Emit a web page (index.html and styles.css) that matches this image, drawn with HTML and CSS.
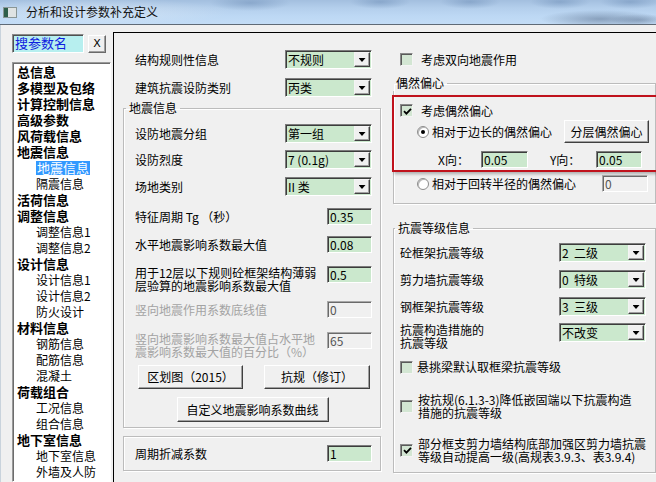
FILE: index.html
```html
<!DOCTYPE html>
<html lang="zh">
<head>
<meta charset="utf-8">
<title>分析和设计参数补充定义</title>
<link rel="stylesheet" href="styles.css">
</head>
<body>
<div class="window">
  <header class="titlebar">
    <svg class="app-icon" width="14" height="11" viewBox="0 0 14 11">
      <rect x="0.5" y="0.5" width="13" height="10" fill="#dfe3e3" stroke="#8a9696"/>
      <rect x="1" y="1" width="4" height="9" fill="#2f5f4a"/>
    </svg>
    <span class="title">分析和设计参数补充定义</span>
  </header>
  <div class="client">
    <aside class="sidebar">
      <div class="search">
        <span class="search-box">搜参数名</span>
        <span class="x-btn">X</span>
      </div>
      <ul class="tree">
        <li class="h">总信息</li>
        <li class="h">多模型及包络</li>
        <li class="h">计算控制信息</li>
        <li class="h">高级参数</li>
        <li class="h">风荷载信息</li>
        <li class="h">地震信息</li>
        <li class="s"><span class="sel">地震信息</span></li>
        <li class="s">隔震信息</li>
        <li class="h">活荷信息</li>
        <li class="h">调整信息</li>
        <li class="s">调整信息1</li>
        <li class="s">调整信息2</li>
        <li class="h">设计信息</li>
        <li class="s">设计信息1</li>
        <li class="s">设计信息2</li>
        <li class="s">防火设计</li>
        <li class="h">材料信息</li>
        <li class="s">钢筋信息</li>
        <li class="s">配筋信息</li>
        <li class="s">混凝土</li>
        <li class="h">荷载组合</li>
        <li class="s">工况信息</li>
        <li class="s">组合信息</li>
        <li class="h">地下室信息</li>
        <li class="s">地下室信息</li>
        <li class="s">外墙及人防</li>
      </ul>
    </aside>

    <main class="pane">
      <section class="mid">
        <div class="top-row">
          <span>结构规则性信息</span>
          <div class="combo"><span class="val">不规则</span><span class="drop"></span></div>
        </div>
        <div class="top-row r2">
          <span>建筑抗震设防类别</span>
          <div class="combo"><span class="val">丙类</span><span class="drop"></span></div>
        </div>

        <fieldset class="group g-quake">
          <legend>地震信息</legend>
          <div class="grow mt8">
            <span>设防地震分组</span>
            <div class="combo"><span class="val">第一组</span><span class="drop"></span></div>
          </div>
          <div class="grow mt7">
            <span>设防烈度</span>
            <div class="combo"><span class="val">7 (0.1g)</span><span class="drop"></span></div>
          </div>
          <div class="grow mt8">
            <span>场地类别</span>
            <div class="combo"><span class="val">II 类</span><span class="drop"></span></div>
          </div>
          <div class="grow mt12">
            <span>特征周期 Tg （秒）</span>
            <span class="tb">0.35</span>
          </div>
          <div class="grow mt11">
            <span>水平地震影响系数最大值</span>
            <span class="tb">0.08</span>
          </div>
          <div class="grow top mt13">
            <span class="two">用于12层以下规则砼框架结构薄弱<br>层验算的地震影响系数最大值</span>
            <span class="tb">0.5</span>
          </div>
          <div class="grow mt9 dis">
            <span>竖向地震作用系数底线值</span>
            <span class="tb off">0</span>
          </div>
          <div class="grow top mt14 dis">
            <span class="two">竖向地震影响系数最大值占水平地<br>震影响系数最大值的百分比（%）</span>
            <span class="tb off">65</span>
          </div>
          <div class="btn-row mt7">
            <span class="btn w105">区划图（2015）</span>
            <span class="btn w106">抗规（修订）</span>
          </div>
          <div class="btn-row center mt8">
            <span class="btn w152 h25">自定义地震影响系数曲线</span>
          </div>
        </fieldset>

        <div class="box">
          <div class="grow">
            <span>周期折减系数</span>
            <span class="tb">1</span>
          </div>
        </div>
      </section>

      <section class="right">
        <div class="cb-row first">
          <span class="cb"></span>
          <span>考虑双向地震作用</span>
        </div>

        <fieldset class="group g-ecc">
          <legend>偶然偏心</legend>
          <div class="red">
            <div class="cb-row in-red">
              <span class="cb on"><svg width="9" height="9" viewBox="0 0 9 9"><path d="M1 4.2 L3.4 6.6 L8 1.8" fill="none" stroke="#000" stroke-width="1.8"/></svg></span>
              <span>考虑偶然偏心</span>
            </div>
            <div class="radio-row">
              <span class="rb on"></span>
              <span class="rb-label">相对于边长的偶然偏心</span>
              <span class="btn w85">分层偶然偏心</span>
            </div>
            <div class="xy-row">
              <span class="xy-lbl">X向：</span>
              <span class="tb w47">0.05</span>
              <span class="xy-lbl ylbl">Y向：</span>
              <span class="tb w46">0.05</span>
            </div>
          </div>
          <div class="radio-row r2row">
            <span class="rb"></span>
            <span class="rb-label">相对于回转半径的偶然偏心</span>
            <span class="tb w46 off push">0</span>
          </div>
        </fieldset>

        <fieldset class="group g-level">
          <legend>抗震等级信息</legend>
          <div class="grow mt7">
            <span>砼框架抗震等级</span>
            <div class="combo"><span class="val">2&nbsp;&nbsp;二级</span><span class="drop"></span></div>
          </div>
          <div class="grow mt8">
            <span>剪力墙抗震等级</span>
            <div class="combo"><span class="val">0&nbsp;&nbsp;特级</span><span class="drop"></span></div>
          </div>
          <div class="grow mt8">
            <span>钢框架抗震等级</span>
            <div class="combo"><span class="val">3&nbsp;&nbsp;三级</span><span class="drop"></span></div>
          </div>
          <div class="grow top mt7">
            <span class="two">抗震构造措施的<br>抗震等级</span>
            <div class="combo"><span class="val">不改变</span><span class="drop"></span></div>
          </div>
          <div class="cb-row g mt11">
            <span class="cb"></span>
            <span>悬挑梁默认取框梁抗震等级</span>
          </div>
          <div class="cb-row g gap5 mt19">
            <span class="cb"></span>
            <span class="two">按抗规(6.1.3-3)降低嵌固端以下抗震构造<br>措施的抗震等级</span>
          </div>
          <div class="cb-row g gap5 mt18">
            <span class="cb on"><svg width="9" height="9" viewBox="0 0 9 9"><path d="M1 4.2 L3.4 6.6 L8 1.8" fill="none" stroke="#000" stroke-width="1.8"/></svg></span>
            <span class="two">部分框支剪力墙结构底部加强区剪力墙抗震<br>等级自动提高一级(高规表3.9.3、表3.9.4)</span>
          </div>
        </fieldset>
      </section>
    </main>
  </div>
</div>
</body>
</html>
```
FILE: styles.css
```css
* { box-sizing: border-box; }
html, body { margin: 0; padding: 0; }
body {
  width: 656px;
  height: 482px;
  overflow: hidden;
  background: #f0f0f0;
  font-family: "Noto Sans CJK SC", "DejaVu Sans", sans-serif;
  font-size: 12px;
  line-height: 14px;
  color: #000;
}
.window { width: 656px; height: 482px; display: flex; flex-direction: column; }

/* title bar */
.titlebar {
  height: 24px;
  flex: none;
  display: flex;
  align-items: center;
  gap: 9px;
  padding-left: 3px;
  background:
    radial-gradient(ellipse 60px 9px at 600px 19px, rgba(70,90,120,.45), transparent),
    radial-gradient(ellipse 30px 6px at 640px 20px, rgba(70,90,120,.35), transparent),
    radial-gradient(ellipse 40px 8px at 250px 3px, rgba(80,115,160,.35), transparent),
    radial-gradient(ellipse 30px 7px at 380px 2px, rgba(80,115,160,.35), transparent),
    radial-gradient(ellipse 30px 7px at 470px 2px, rgba(80,115,160,.35), transparent),
    radial-gradient(ellipse 30px 7px at 560px 2px, rgba(80,115,160,.35), transparent),
    radial-gradient(ellipse 30px 7px at 630px 2px, rgba(80,115,160,.35), transparent),
    radial-gradient(ellipse 140px 14px at 90px 12px, rgba(225,235,245,.55), transparent),
    linear-gradient(#a3bfdf 0, #b4cfec 8px, #bdd8f4 16px, #c3dcf6 24px);
}
.app-icon { flex: none; }
.title { font-size: 12px; line-height: 14px; color: #111; }

/* client */
.client {
  flex: 1;
  min-height: 0;
  display: flex;
  border-top: 1px solid #5f6a76;
}
.sidebar {
  width: 113px;
  flex: none;
  display: flex;
  flex-direction: column;
  padding: 9px 0 0 12px;
  border-left: 1px solid #c9d3dc;
}
.search { display: flex; align-items: center; height: 19px; margin-left: -1px; }
.search-box {
  width: 72px;
  height: 19px;
  background: #b7efef;
  color: #1020e0;
  font-size: 13px;
  line-height: 15px;
  padding-left: 2px;
  border: 1px solid;
  border-color: #8a8a8a #ffffff #ffffff #8a8a8a;
  box-shadow: inset 1px 1px 0 #505050;
}
.x-btn {
  width: 18px;
  height: 18px;
  margin-left: 4px;
  display: flex;
  align-items: center;
  justify-content: center;
  font-family: "DejaVu Sans", sans-serif;
  font-size: 11px;
  background: #f0f0f0;
  border: 1px solid;
  border-color: #ffffff #6a6a6a #6a6a6a #ffffff;
  box-shadow: inset -1px -1px 0 #a0a0a0;
}
.tree {
  list-style: none;
  margin: 9px 0 0 -1px;
  padding: 1px 0 0 4px;
  width: 99px;
  flex: 1;
  background: #ffffff;
  border: 1px solid;
  border-color: #9a9a9a #ffffff #ffffff #9a9a9a;
  box-shadow: inset 1px 1px 0 #6c6c6c;
}
.tree li { height: 16px; line-height: 16px; white-space: nowrap; }
.tree .h { font-weight: bold; font-size: 13px; }
.tree .s { padding-left: 19px; font-size: 12px; }
.tree .sel {
  background: #3399ff;
  color: #ffffff;
  padding: 0 1px;
  display: inline-block;
  line-height: 14px;
  font-size: 13px;
}

/* main pane */
.pane {
  flex: 1;
  margin-top: 7px;
  display: flex;
  border-top: 1px solid #000;
  border-left: 1px solid #000;
}
.mid { width: 271px; flex: none; display: flex; flex-direction: column; padding-top: 17px; }
.right { flex: 1; display: flex; flex-direction: column; padding-top: 20px; }

.top-row {
  height: 19px;
  display: flex;
  align-items: center;
  justify-content: space-between;
  padding: 0 13px 0 21px;
}
.top-row.r2 { margin-top: 9px; }

/* group boxes */
.group {
  border: 1px solid #bcbcbc;
  box-shadow: inset 1px 1px 0 #fff, 1px 1px 0 #fff;
  min-width: 0;
  margin: 0;
}
.group legend { padding: 0 3px; line-height: 16px; font-size: 12px; }
.g-quake { margin: 3px 4px 0 9px; padding: 0 8px 5px 11px; }
.g-quake legend { margin-left: -9px; }
.g-ecc { margin: 9px 6px 0 8px; padding: 0 9px 11px 6px; }
.g-ecc legend { margin-left: -7px; }
.g-level { margin: 16px 6px 0 8px; padding: 0 9px 9px 6px; }
.g-level legend { margin-left: -5px; }

.box {
  margin: 8px 4px 0 9px;
  padding: 8px 8px 8px 11px;
  border: 1px solid #bcbcbc;
  box-shadow: inset 1px 1px 0 #fff, 1px 1px 0 #fff;
}

.grow { display: flex; align-items: center; justify-content: space-between; white-space: nowrap; }
.grow.top { align-items: flex-start; }
.two { line-height: 13px; white-space: nowrap; }
.dis > span:first-child { color: #a3a3a3; }

.mt7 { margin-top: 7px; }
.mt8 { margin-top: 8px; }
.mt9 { margin-top: 9px; }
.mt11 { margin-top: 11px; }
.mt12 { margin-top: 12px; }
.mt13 { margin-top: 13px; }
.mt14 { margin-top: 14px; }
.mt18 { margin-top: 18px; }
.mt19 { margin-top: 19px; }

/* combo box */
.combo {
  width: 87px;
  height: 19px;
  flex: none;
  display: flex;
  background: #cbe8cd;
  border: 1px solid;
  border-color: #7c7c7c #ffffff #ffffff #7c7c7c;
  box-shadow: inset 1px 1px 0 #3c3c3c;
}
.combo .val { flex: 1; padding-left: 2px; line-height: 17px; white-space: nowrap; overflow: hidden; }
.combo .drop {
  width: 16px;
  flex: none;
  margin: 1px 1px 1px 0;
  background: #f0f0f0;
  border: 1px solid;
  border-color: #f4f4f4 #404040 #404040 #f4f4f4;
  box-shadow: inset -1px -1px 0 #a0a0a0;
  display: flex;
  align-items: center;
  justify-content: center;
}
.combo .drop::after {
  content: "";
  width: 7px;
  height: 4px;
  background: #000;
  clip-path: polygon(0 0, 100% 0, 50% 100%);
  margin-top: 1px;
}

/* text boxes */
.tb {
  width: 45px;
  height: 17px;
  flex: none;
  background: #cbe8cd;
  line-height: 15px;
  padding-left: 2px;
  border: 1px solid;
  border-color: #7c7c7c #ffffff #ffffff #7c7c7c;
  box-shadow: inset 1px 1px 0 #3c3c3c;
}
.tb.off { background: #f0f0f0; color: #555; border-color: #a8a8a8 #ffffff #ffffff #a8a8a8; box-shadow: inset 1px 1px 0 #6a6a6a; }
.w46 { width: 46px; }
.w47 { width: 47px; }

/* buttons */
.btn-row { display: flex; justify-content: space-between; padding: 0 2px 0 3px; }
.btn-row.center { justify-content: center; padding: 0 2px 0 0; }
.btn {
  height: 24px;
  display: flex;
  align-items: center;
  justify-content: center;
  white-space: nowrap;
  background: #f0f0f0;
  border: 1px solid;
  border-color: #ffffff #404040 #404040 #ffffff;
  box-shadow: inset -1px -1px 0 #a0a0a0;
}
.w105 { width: 105px; }
.w106 { width: 106px; }
.w152 { width: 152px; }
.w85 { width: 85px; }
.h25 { height: 25px; }

/* checkboxes */
.cb-row { display: flex; align-items: center; gap: 8px; white-space: nowrap; }
.cb-row.first { padding-left: 15px; height: 13px; }
.cb-row.g { gap: 4px; }
.cb-row.gap5 { gap: 5px; }
.cb {
  width: 13px;
  height: 13px;
  flex: none;
  background: #d3e6d3;
  border: 1px solid;
  border-color: #8a8a8a #f4f4f4 #f4f4f4 #8a8a8a;
  box-shadow: inset 1px 1px 0 #5a5a5a;
  display: flex;
  align-items: center;
  justify-content: center;
}
.cb svg { display: block; margin: 1px 0 0 1px; }

/* red annotation frame */
.red {
  margin: 4px -12px 0 -8px;
  padding: 0 7px 2px 6px;
  border: 2px solid #c0121c;
  box-shadow: 2px 2px 3px rgba(0, 0, 0, .28);
}
.cb-row.in-red { margin-top: 7px; height: 13px; }
.radio-row { display: flex; align-items: center; white-space: nowrap; height: 23px; margin-top: 3px; padding-left: 17px; }
.r2row { height: 17px; margin-top: 3px; padding-left: 17px; }
.rb {
  width: 12px;
  height: 12px;
  flex: none;
  border-radius: 50%;
  background: #ffffff;
  border: 1px solid #8c8c8c;
  box-shadow: inset 1px 1px 0 #b8b8b8;
  display: flex;
  align-items: center;
  justify-content: center;
}
.rb.on::after { content: ""; width: 4px; height: 4px; border-radius: 50%; background: #000; }
.rb-label { margin-left: 3px; }
.radio-row .btn { margin-left: auto; height: 23px; }
.push { margin-left: auto; margin-right: -2px; }
.xy-row { display: flex; align-items: center; height: 17px; margin-top: 8px; padding-left: 38px; white-space: nowrap; }
.xy-lbl { width: 43px; flex: none; }
.ylbl { margin-left: 22px; width: 46px; }
```
